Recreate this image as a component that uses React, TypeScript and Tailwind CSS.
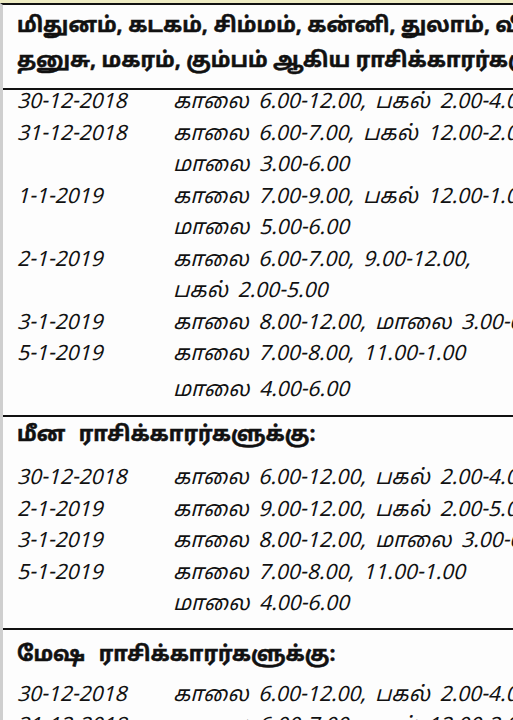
import React from 'react';

type Row = { date?: string; time: string };

const section1: Row[] = [
  { date: '30-12-2018', time: 'காலை 6.00-12.00, பகல் 2.00-4.00' },
  { date: '31-12-2018', time: 'காலை 6.00-7.00, பகல் 12.00-2.00' },
  { time: 'மாலை 3.00-6.00' },
  { date: '1-1-2019', time: 'காலை 7.00-9.00, பகல் 12.00-1.00' },
  { time: 'மாலை 5.00-6.00' },
  { date: '2-1-2019', time: 'காலை 6.00-7.00, 9.00-12.00,' },
  { time: 'பகல் 2.00-5.00' },
  { date: '3-1-2019', time: 'காலை 8.00-12.00, மாலை 3.00-6.00' },
  { date: '5-1-2019', time: 'காலை 7.00-8.00, 11.00-1.00' },
];

const section2: Row[] = [
  { date: '30-12-2018', time: 'காலை 6.00-12.00, பகல் 2.00-4.00' },
  { date: '2-1-2019', time: 'காலை 9.00-12.00, பகல் 2.00-5.00' },
  { date: '3-1-2019', time: 'காலை 8.00-12.00, மாலை 3.00-6.00' },
  { date: '5-1-2019', time: 'காலை 7.00-8.00, 11.00-1.00' },
  { time: 'மாலை 4.00-6.00' },
];

const section3: Row[] = [
  { date: '30-12-2018', time: 'காலை 6.00-12.00, பகல் 2.00-4.00' },
  { date: '31-12-2018', time: 'காலை 6.00-7.00, பகல் 12.00-2.00' },
  { time: 'மாலை 3.00-6.00' },
];

const RowLine = ({ row, className = '' }: { row: Row; className?: string }) => (
  <div className={`flex whitespace-nowrap leading-[31.5px] ${className}`}>
    <span className="w-[156px] shrink-0">{row.date}</span>
    <span className="[word-spacing:4px]">{row.time}</span>
  </div>
);

const Heading = ({ children }: { children: React.ReactNode }) => (
  <div className="whitespace-nowrap font-bold text-[21px] leading-[38px] [word-spacing:8px] [-webkit-text-stroke:0.5px_#111]">
    {children}
  </div>
);

export default function App() {
  return (
    <div
      className="w-[513px] h-[720px] overflow-hidden bg-[#fdfdfd] text-[#111]"
      style={{ fontFamily: '"Noto Sans Tamil", "Lohit Tamil", "Noto Sans", "Liberation Sans", sans-serif' }}
    >
      <div className="h-[3px] bg-[#eeecc4]" />
      <div className="border-t-2 border-[#111] border-l-[3px] border-l-[#cfcfcf] h-full">
        {/* header */}
        <div className="pl-[14px] pt-[5px] pb-[8px] border-b-2 border-[#111] font-bold text-[21px] leading-[35px] whitespace-nowrap [-webkit-text-stroke:0.5px_#111]">
          <div>மிதுனம், கடகம், சிம்மம், கன்னி, துலாம், விருச்சிகம்,</div>
          <div>தனுசு, மகரம், கும்பம் ஆகிய ராசிக்காரர்களுக்கு:</div>
        </div>

        <div className="pl-[14px] italic text-[21px] -mt-[2px] pb-[8px] border-b-2 border-[#111]">
          {section1.map((r, i) => (
            <RowLine key={i} row={r} />
          ))}
          <RowLine row={{ time: 'மாலை 4.00-6.00' }} className="mt-[4px]" />
        </div>

        <div className="pl-[14px] pb-[6px] border-b-2 border-[#111]">
          <div className="pb-[9px]">
            <Heading>மீன ராசிக்காரர்களுக்கு:</Heading>
          </div>
          <div className="italic text-[21px]">
            {section2.map((r, i) => (
              <RowLine key={i} row={r} />
            ))}
          </div>
        </div>

        <div className="pl-[14px]">
          <div className="pt-[7px] pb-[6px]">
            <Heading>மேஷ ராசிக்காரர்களுக்கு:</Heading>
          </div>
          <div className="italic text-[21px]">
            {section3.map((r, i) => (
              <RowLine key={i} row={r} />
            ))}
          </div>
        </div>
      </div>
    </div>
  );
}
